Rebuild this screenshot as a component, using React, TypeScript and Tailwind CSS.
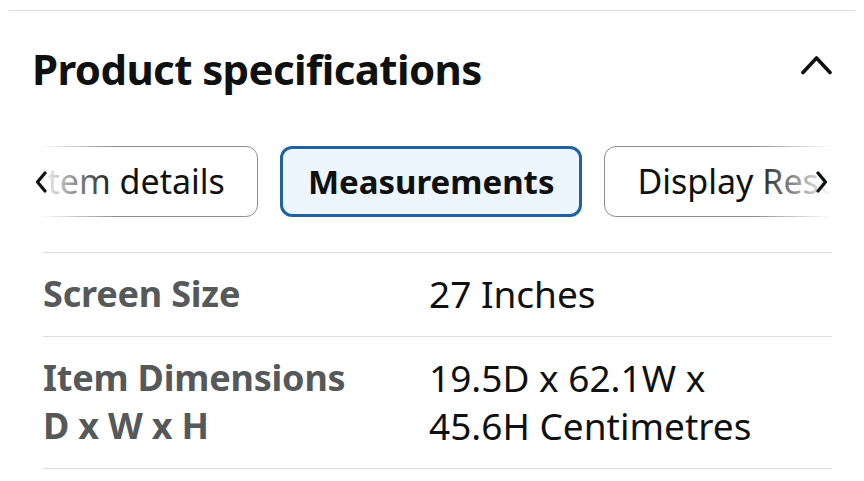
import React from "react";

const specs = [
  { label: ["Screen Size"], value: ["27 Inches"] },
  { label: ["Item Dimensions", "D x W x H"], value: ["19.5D x 62.1W x", "45.6H Centimetres"] },
];

const tabs = [
  { name: "Item details", active: false },
  { name: "Measurements", active: true },
  { name: "Display Resolution", active: false },
];

export default function App() {
  return (
    <div
      className="w-[864px] h-[481px] bg-white overflow-hidden text-[#0f1111]"
      style={{ fontFamily: '"Noto Sans", "Open Sans", sans-serif' }}
    >
      {/* top divider */}
      <div className="pt-[10px] mx-[9px] border-b border-[#dddfdf]" />

      {/* heading */}
      <div className="flex items-center justify-between px-[32px] mt-[30px]">
        <h2 className="text-[42px] leading-[56px] font-bold tracking-[-0.6px]">Product specifications</h2>
        <svg width="31" height="20" viewBox="0 0 31 20" className="mt-[-8px]" aria-hidden>
          <polyline points="2,17.5 15.5,3 29,17.5" fill="none" stroke="#0f1111" strokeWidth="3.6" strokeLinecap="round" strokeLinejoin="round" />
        </svg>
      </div>

      {/* tab strip */}
      <div className="relative mt-[49px] h-[71px] overflow-hidden">
        <div className="flex gap-[22px] pl-[3px] whitespace-nowrap">
          {tabs.map((t) =>
            t.active ? (
              <div
                key={t.name}
                className="h-[71px] flex items-center px-[25px] rounded-[12px] border-[3px] border-[#2162a1] bg-[#edf6ff] text-[33px] font-bold"
              >
                {t.name}
              </div>
            ) : (
              <div
                key={t.name}
                className="h-[71px] flex items-center px-[32px] rounded-[12px] border border-[#8d9090] text-[34px]"
              >
                {t.name}
              </div>
            )
          )}
        </div>

        {/* left fade + arrow */}
        <div className="absolute left-0 top-0 h-full w-[115px] bg-gradient-to-r from-white from-35% to-transparent flex items-center pl-[35px]">
          <svg width="12" height="22" viewBox="0 0 12 22" aria-hidden>
            <polyline points="10,2 2.5,11 10,20" fill="none" stroke="#0f1111" strokeWidth="3.2" strokeLinecap="round" strokeLinejoin="round" />
          </svg>
        </div>
        {/* right fade + arrow */}
        <div className="absolute right-0 top-0 h-full w-[110px] bg-gradient-to-l from-white from-30% to-transparent flex items-center justify-end pr-[36px]">
          <svg width="12" height="22" viewBox="0 0 12 22" aria-hidden>
            <polyline points="2,2 9.5,11 2,20" fill="none" stroke="#0f1111" strokeWidth="3.2" strokeLinecap="round" strokeLinejoin="round" />
          </svg>
        </div>
      </div>

      {/* spec table */}
      <div className="ml-[43px] mr-[32px] mt-[35px] border-b border-[#dddfdf]">
        {specs.map((s, i) => (
          <div
            key={s.label[0]}
            className={`flex border-t border-[#dddfdf] text-[37px] leading-[48px] ${i === 0 ? "pt-[17px] pb-[18px]" : "pt-[17px] pb-[18px]"}`}
          >
            <div className="w-[386px] font-bold text-[#565959] text-[36px] tracking-[-0.2px]">
              {s.label.map((l) => (
                <div key={l}>{l}</div>
              ))}
            </div>
            <div className="flex-1">
              {s.value.map((v) => (
                <div key={v}>{v}</div>
              ))}
            </div>
          </div>
        ))}
      </div>
    </div>
  );
}
